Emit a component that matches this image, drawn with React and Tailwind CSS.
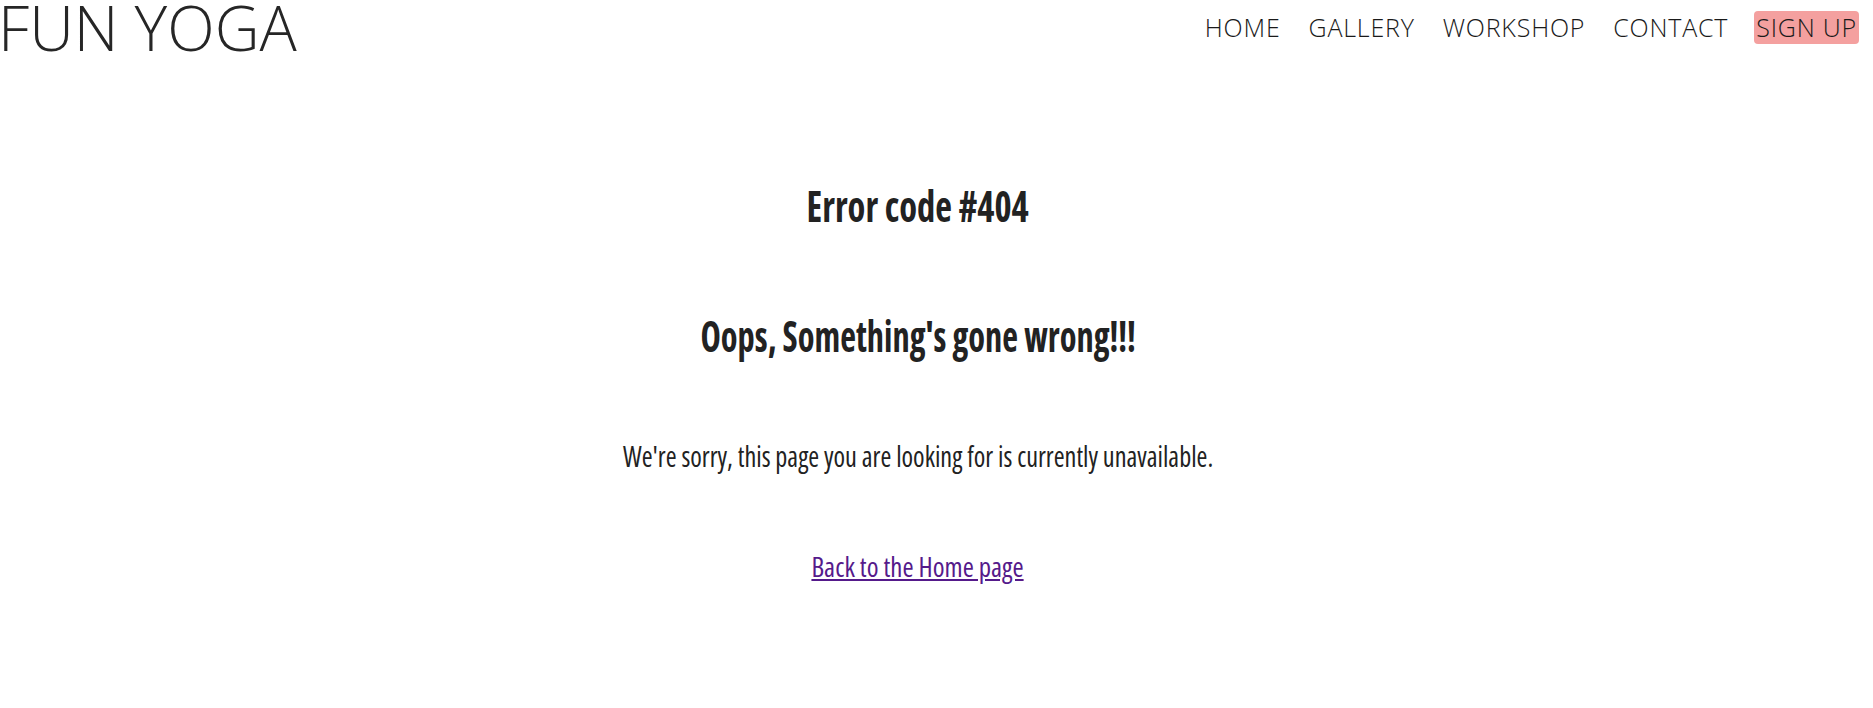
export default function App() {
  const nav = ["HOME", "GALLERY", "WORKSHOP", "CONTACT"];
  return (
    <div className="min-h-[708px] w-full bg-white text-[#222]">
      <header className="flex h-[60px] items-start justify-between">
        <div className="ml-[-2px] font-['Open_Sans',sans-serif] text-[62px] font-light leading-[54px] text-[#262626]">
          FUN YOGA
        </div>
        <nav className="mt-[11px] mr-[14px] flex items-center gap-[28px] font-['Open_Sans',sans-serif] text-[25px] font-light tracking-[0.8px] text-[#1a1a1a]">
          {nav.map((n) => (
            <a key={n} href="#" className="leading-[33px]">
              {n}
            </a>
          ))}
          <a href="#" className="ml-[-2px] rounded-[4px] bg-[#f4a09f] px-[2px] leading-[33px]">
            SIGN UP
          </a>
        </nav>
      </header>
      <main className="flex flex-col items-center pr-[37px] font-['Open_Sans',sans-serif] font-stretch-condensed text-[#222]">
        <h1 className="mt-[124px] scale-x-[0.85] text-[43px] font-bold leading-none">
          Error code #404
        </h1>
        <h2 className="mt-[87px] scale-x-[0.8] text-[43px] font-bold leading-none">
          Oops, Something's gone wrong!!!
        </h2>
        <p className="mt-[84px] scale-x-[0.905] text-[29px] font-medium leading-none">
          We're sorry, this page you are looking for is currently unavailable.
        </p>
        <a href="#" className="mt-[82px] scale-x-[0.96] text-[28px] font-medium leading-none text-[#551a8b] underline">
          Back to the Home page
        </a>
      </main>
    </div>
  );
}
